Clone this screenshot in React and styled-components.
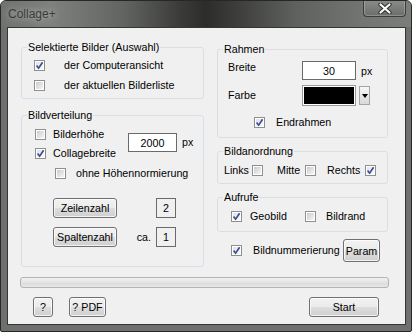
import React from 'react';
import styled, { createGlobalStyle } from 'styled-components';

const GlobalStyle = createGlobalStyle`
  html, body { margin: 0; padding: 0; background: #fff; }
  body {
    font-family: "Liberation Sans", Arial, sans-serif;
    font-size: 10.7px;
    color: #000;
  }
`;

const Window = styled.div`
  box-sizing: border-box;
  width: 412px;
  height: 332px;
  border: 1px solid #262726;
  border-radius: 6px 6px 2px 2px;
  background: #6e706e;
  display: flex;
  flex-direction: column;
  overflow: hidden;
`;

const TitleBar = styled.div`
  flex: none;
  height: 26px;
  display: flex;
  align-items: flex-start;
  justify-content: space-between;
  padding: 0 5px 0 7px;
  background: linear-gradient(90deg, #707270 0%, #7f817f 12%, #626462 30%, #3a3b39 44%, #2c2d2b 50%, #3c3d3b 57%, #5f615f 72%, #737573 88%, #7b7d7b 100%);
`;

const Title = styled.span`
  margin-top: 6px;
  font-size: 12px;
  line-height: 14px;
  color: #3a3b3a;
  text-shadow: 0 0 6px rgba(235, 235, 235, 0.7);
`;

const CloseButton = styled.div`
  box-sizing: border-box;
  width: 43px;
  height: 17px;
  margin-top: -1px;
  display: flex;
  align-items: center;
  justify-content: center;
  border: 1px solid #3b3c3b;
  border-top: none;
  border-radius: 0 0 4px 4px;
  background: linear-gradient(#8a8c8a, #6c6e6c);
  box-shadow: inset 0 0 0 1px rgba(255, 255, 255, 0.22);
`;

const Client = styled.div`
  flex: 1;
  box-sizing: border-box;
  margin: 0 5px 6px 6px;
  padding: 13px 17px 0 13px;
  border: 1px solid #343534;
  background: #f0f0f0;
  display: flex;
  flex-direction: column;
`;

const Columns = styled.div`
  display: grid;
  grid-template-columns: 183px 171px;
  column-gap: 13px;
  align-items: start;
`;

const Column = styled.div`
  display: flex;
  flex-direction: column;
  margin-top: ${p => p.$mt || 0}px;
`;

const Group = styled.fieldset`
  margin: ${p => p.$mt || 0}px 0 0 0;
  padding: 0;
  min-width: 0;
  border: 1px solid #d5dfe5;
  border-radius: 3px;
`;

const Legend = styled.legend`
  padding: 0 1px;
  margin-left: 5px;
  line-height: 13px;
`;

const Body = styled.div`
  padding: ${p => p.$pad};
`;

const CheckRow = styled.div`
  display: flex;
  align-items: center;
  height: ${p => p.$h || 13}px;
  padding-left: ${p => p.$indent || 0}px;
  gap: ${p => p.$gap || 6}px;
  white-space: nowrap;
  line-height: 13px;
`;

const BoxFrame = styled.span`
  box-sizing: border-box;
  flex: none;
  width: 11px;
  height: 11px;
  padding: 1px;
  border: 1px solid #8e8f8f;
  background: #fff;
  display: flex;
`;

const BoxFill = styled.span`
  flex: 1;
  display: flex;
  align-items: center;
  justify-content: center;
  background: ${p => p.$on
    ? 'linear-gradient(135deg, #dfe2e7, #f9f9f9)'
    : 'linear-gradient(135deg, #c9cbcf, #f6f6f6)'};
`;

const Check = ({ on }) => (
  <BoxFrame>
    <BoxFill $on={on}>
      {on && (
        <svg width="9" height="9" viewBox="0 0 9 9" style={{ margin: -1 }}>
          <path d="M1.6 4.6 L3.6 7.2 L7.6 1.2" fill="none" stroke="#3b4a8e" strokeWidth="1.6" />
        </svg>
      )}
    </BoxFill>
  </BoxFrame>
);

const Label = styled.span`
  display: inline-block;
  min-width: ${p => p.$w || 0}px;
  line-height: 13px;
  white-space: nowrap;
`;

const Button = styled.div`
  box-sizing: border-box;
  flex: none;
  width: ${p => p.$w}px;
  height: ${p => p.$h || 20}px;
  display: flex;
  align-items: center;
  justify-content: center;
  border: 1px solid #707070;
  border-radius: 3px;
  background: linear-gradient(#f2f2f2 0%, #ebebeb 48%, #dddddd 52%, #cfcfcf 100%);
  box-shadow: inset 0 0 0 1px rgba(255, 255, 255, 0.75);
  white-space: nowrap;
`;

const TextField = styled.div`
  box-sizing: border-box;
  width: ${p => p.$w}px;
  height: 19px;
  border: 1px solid #6a6a6a;
  background: #fff;
  display: flex;
  align-items: center;
  justify-content: center;
`;

const CountBox = styled.div`
  box-sizing: border-box;
  width: 20px;
  height: 20px;
  border: 1px solid #6a6a6a;
  display: flex;
  align-items: center;
  justify-content: center;
`;

const TopBlock = styled.div`
  display: flex;
  align-items: flex-start;
`;

const Stack = styled.div`
  width: 93px;
  display: flex;
  flex-direction: column;
`;

const InputCell = styled.div`
  display: flex;
  align-items: center;
  gap: 5px;
  margin-top: 8px;
`;

const CountGrid = styled.div`
  display: grid;
  grid-template-columns: 64px 39px 20px;
  grid-auto-rows: 20px;
  row-gap: 9px;
  align-items: center;
  margin: 15px 0 0 18px;
`;

const Ca = styled.span`
  text-align: right;
  padding-right: 5px;
`;

const FrameGrid = styled.div`
  display: grid;
  grid-template-columns: 74px 54px auto;
  grid-template-rows: 19px 21px;
  row-gap: 5px;
  align-items: center;
`;

const TopLabel = styled.span`
  align-self: start;
  line-height: 13px;
`;

const Trail = styled.div`
  display: flex;
  align-items: center;
  padding-left: ${p => p.$pl}px;
`;

const ColorWell = styled.div`
  box-sizing: border-box;
  height: 21px;
  border: 1px solid #9a9a9a;
  padding: 1px;
  background: #fff;
  display: flex;
`;

const ColorFill = styled.div`
  flex: 1;
  background: #000;
`;

const DropArrow = styled.div`
  box-sizing: border-box;
  width: 11px;
  height: 19px;
  border: 1px solid #a5a5a5;
  background: linear-gradient(#f7f7f7, #d9d9d9);
  display: flex;
  align-items: center;
  justify-content: center;
`;

const RowGrid = styled.div`
  display: grid;
  grid-template-columns: ${p => p.$cols};
  align-items: center;
  height: 13px;
`;

const Inline = styled.div`
  display: flex;
  align-items: center;
  gap: ${p => p.$gap || 0}px;
`;

const NumRow = styled.div`
  display: flex;
  align-items: center;
  height: 23px;
  margin-top: 7px;
  padding: 0 8px 0 14px;
  gap: 11px;
`;

const Progress = styled.div`
  box-sizing: border-box;
  height: 11px;
  margin: 10px -1px 0 -1px;
  border: 1px solid #b4b4b4;
  border-radius: 3px;
  background: linear-gradient(#f1f1f1, #e3e3e3 50%, #dbdbdb 50%, #e6e6e6);
`;

const Footer = styled.div`
  display: flex;
  align-items: center;
  margin-top: 9px;
  padding: 0 9px 0 12px;
  gap: 16px;
`;

const Push = styled.div`
  flex: 1;
`;

export default function App() {
  return (
    <>
      <GlobalStyle />
      <Window>
        <TitleBar>
          <Title>Collage+</Title>
          <CloseButton>
            <svg width="14" height="11" viewBox="0 0 14 11">
              <path d="M2.5 1.5 L11.5 9.5 M11.5 1.5 L2.5 9.5" stroke="#2d2e2d" strokeWidth="4.2" strokeLinecap="round" />
              <path d="M2.5 1.5 L11.5 9.5 M11.5 1.5 L2.5 9.5" stroke="#fbfbfb" strokeWidth="2.2" strokeLinecap="round" />
            </svg>
          </CloseButton>
        </TitleBar>
        <Client>
          <Columns>
            <Column>
              <Group>
                <Legend>Selektierte Bilder (Auswahl)</Legend>
                <Body $pad="1px 0 3px 12px">
                  <CheckRow $h={20} $gap={19}>
                    <Check on />
                    <Label>der Computeransicht</Label>
                  </CheckRow>
                  <CheckRow $h={20} $gap={19}>
                    <Check />
                    <Label>der aktuellen Bilderliste</Label>
                  </CheckRow>
                </Body>
              </Group>
              <Group $mt={10}>
                <Legend>Bildverteilung</Legend>
                <Body $pad="3px 0 19px 13px">
                  <TopBlock>
                    <Stack>
                      <CheckRow $h={19} $gap={7}>
                        <Check />
                        <Label>Bilderhöhe</Label>
                      </CheckRow>
                      <CheckRow $h={19} $gap={7}>
                        <Check on />
                        <Label>Collagebreite</Label>
                      </CheckRow>
                    </Stack>
                    <InputCell>
                      <TextField $w={49}>2000</TextField>
                      <Label>px</Label>
                    </InputCell>
                  </TopBlock>
                  <CheckRow $h={20} $indent={20} $gap={10}>
                    <Check />
                    <Label>ohne Höhennormierung</Label>
                  </CheckRow>
                  <CountGrid>
                    <Button $w={64}>Zeilenzahl</Button>
                    <span />
                    <CountBox>2</CountBox>
                    <Button $w={64}>Spaltenzahl</Button>
                    <Ca>ca.</Ca>
                    <CountBox>1</CountBox>
                  </CountGrid>
                </Body>
              </Group>
            </Column>

            <Column $mt={2}>
              <Group>
                <Legend>Rahmen</Legend>
                <Body $pad="5px 0 8px 10px">
                  <FrameGrid>
                    <TopLabel>Breite</TopLabel>
                    <TextField $w={54}>30</TextField>
                    <Trail $pl={5}>px</Trail>
                    <Label>Farbe</Label>
                    <ColorWell>
                      <ColorFill />
                    </ColorWell>
                    <Trail $pl={3}>
                      <DropArrow>
                        <svg width="6" height="4" viewBox="0 0 6 4">
                          <path d="M0 0 H6 L3 4 Z" fill="#000" />
                        </svg>
                      </DropArrow>
                    </Trail>
                  </FrameGrid>
                  <CheckRow $indent={26} $gap={11} style={{ marginTop: 10 }}>
                    <Check on />
                    <Label>Endrahmen</Label>
                  </CheckRow>
                </Body>
              </Group>
              <Group $mt={7}>
                <Legend>Bildanordnung</Legend>
                <Body $pad="6px 0 6px 6px">
                  <RowGrid $cols="53px 50px auto">
                    <Inline>
                      <Label $w={28}>Links</Label>
                      <Check />
                    </Inline>
                    <Inline>
                      <Label $w={28}>Mitte</Label>
                      <Check />
                    </Inline>
                    <Inline>
                      <Label $w={38}>Rechts</Label>
                      <Check on />
                    </Inline>
                  </RowGrid>
                </Body>
              </Group>
              <Group $mt={7}>
                <Legend>Aufrufe</Legend>
                <Body $pad="6px 0 8px 13px">
                  <RowGrid $cols="74px auto">
                    <Inline $gap={8}>
                      <Check on />
                      <Label>Geobild</Label>
                    </Inline>
                    <Inline $gap={10}>
                      <Check />
                      <Label>Bildrand</Label>
                    </Inline>
                  </RowGrid>
                </Body>
              </Group>
              <NumRow>
                <Check on />
                <Label>Bildnummerierung</Label>
                <Push />
                <Button $w={37} $h={23}>Param</Button>
              </NumRow>
            </Column>
          </Columns>

          <Progress />

          <Footer>
            <Button $w={20}>?</Button>
            <Button $w={37}>? PDF</Button>
            <Push />
            <Button $w={70}>Start</Button>
          </Footer>
        </Client>
      </Window>
    </>
  );
}
